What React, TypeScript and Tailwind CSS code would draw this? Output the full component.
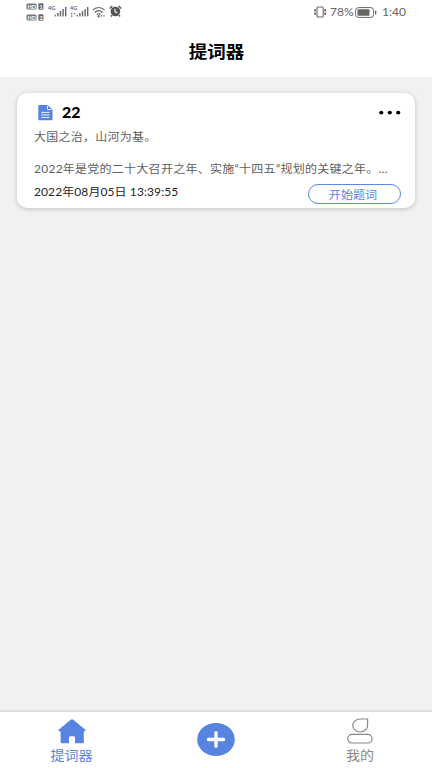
import type { ReactNode } from 'react';

interface Script {
  title: string;
  lines: string[];
  createdAt: string;
}

const scripts: Script[] = [
  {
    title: '22',
    lines: ['大国之治，山河为基。', '2022年是党的二十大召开之年、实施“十四五”规划的关键之年。…'],
    createdAt: '2022年08月05日 13:39:55',
  },
];

function Signal({ dots }: { dots?: boolean }) {
  return (
    <svg width="20" height="13" viewBox="0 0 20 13" fill="#666">
      <text x="0" y="5" fontSize="5.5" fontWeight="700">4G</text>
      {dots && <path d="M1 8h1.4v1.2H1zM4 8h1.4v1.2H4zM1 10.5h1.4v1.2H1z" />}
      <rect x="6.6" y="9.8" width="1.3" height="1.6" />
      <rect x="9.2" y="8" width="1.4" height="3.4" />
      <rect x="11.8" y="6" width="1.4" height="5.4" />
      <rect x="14.4" y="4" width="1.4" height="7.4" />
      <rect x="17" y="2" width="1.4" height="9.4" />
    </svg>
  );
}

function HdBadge({ n }: { n: number }) {
  return (
    <svg width="18" height="7" viewBox="0 0 18 7" fontSize="5.5" fontWeight="700">
      <rect x=".4" y=".4" width="10.2" height="6.2" rx="1.5" fill="#777" />
      <text x="1.5" y="5.5" fill="#fff">HD</text>
      <rect x="12.4" y=".2" width="5" height="6.6" rx="1" fill="#666" />
      <text x="13.4" y="5.5" fill="#fff">{n}</text>
    </svg>
  );
}

function StatusBar() {
  return (
    <div className="flex h-6 items-start justify-between pr-[26px] pl-[26px]">
      <div className="flex pt-[3px]">
        <div className="mr-[4px] flex flex-col gap-[4px]">
          <HdBadge n={1} />
          <HdBadge n={2} />
        </div>
        <div className="flex gap-[2px] pt-[2px]">
          <Signal />
          <Signal dots />
        </div>
        <svg className="mt-[3px] ml-[2px]" width="15" height="12" viewBox="0 0 15 12" fill="none" stroke="#666" strokeWidth="1.2">
          <path d="M.8 4.2C4.2.6 9.2.6 12.6 4.2M2.8 6.5C5.2 4 8.2 4 10.6 6.5M4.8 8.7C6.1 7.4 7.4 7.4 8.6 8.7" />
          <circle cx="6.7" cy="10.3" r=".6" fill="#666" />
          <path d="M9.7 9v1.6M12 9v1.6" strokeWidth="1" />
        </svg>
        <svg className="mt-[2px] ml-[2px]" width="13" height="12" viewBox="0 0 13 12">
          <circle cx="6.4" cy="6.5" r="4.8" fill="#555" />
          <path d="M.8 3.5 3.2 1M12.1 3.5 9.7 1M3 10.2l-1.2 1.3M9.9 10.2l1.2 1.3" stroke="#555" strokeWidth="1.5" />
          <path d="M6 3.8v3l2.3 1.3" fill="none" stroke="#fff" strokeWidth="1.1" />
        </svg>
      </div>
      <div className="flex items-center pt-[5px] text-[12px] leading-[14px] text-[#666]">
        <svg width="15" height="12" viewBox="0 0 15 12" fill="none" stroke="#666" strokeWidth="1.1">
          <rect x="4" y="1" width="6.2" height="10" rx="1" />
          <path d="M2 3v6M12.2 3v6" strokeWidth="1.6" strokeDasharray="2.4 1.2" />
        </svg>
        <span className="ml-[2px] w-[24px] text-[12px] whitespace-nowrap">78%</span>
        <svg className="ml-[1px]" width="22" height="11" viewBox="0 0 22 11">
          <rect x=".6" y=".6" width="18" height="9.8" rx="2.8" fill="none" stroke="#666" strokeWidth="1" />
          <rect x="2.5" y="2.3" width="12" height="6.4" rx="1" fill="#666" />
          <rect x="20" y="3.5" width="1.3" height="4" rx=".6" fill="#666" />
        </svg>
        <span className="ml-[5px] w-[24px] text-[12px] whitespace-nowrap">1:40</span>
      </div>
    </div>
  );
}

function ScriptCard({ script }: { script: Script }) {
  return (
    <div className="mx-[17px] h-[115px] rounded-[10px] bg-white pt-[11px] pr-[14px] pl-[17px] shadow-[0_1px_5px_rgba(0,0,0,0.2)]">
      <div className="flex h-[17px] items-center">
        <svg className="ml-[4px]" width="15" height="16" viewBox="0 0 15 16">
          <path d="M1.2 0H9.5L14.5 4.5V14.5Q14.5 15.3 13.7 15.3H1.2Q.3 15.3 .3 14.5V.8Q.3 0 1.2 0Z" fill="#5784e0" />
          <path d="M9.5 1V3.8Q9.5 4.6 10.3 4.6H13.4" fill="none" stroke="#fff" strokeWidth="1" />
          <path d="M3.2 7.4H11.5M3.2 9.9H11.5M3.2 12.4H11.5" stroke="#fff" strokeWidth=".9" />
        </svg>
        <span className="ml-[9px] origin-left scale-x-[1.06] text-[15px] leading-[17px] font-black text-black">{script.title}</span>
        <svg className="ml-auto" width="22" height="6" viewBox="0 0 22 6">
          <ellipse cx="2.3" cy="2.6" rx="2.1" ry="1.9" />
          <ellipse cx="10.8" cy="2.6" rx="2.1" ry="1.9" />
          <ellipse cx="19.2" cy="2.6" rx="2.1" ry="1.9" />
        </svg>
      </div>
      <div className="mt-[8px] space-y-4 text-[11px] leading-4 tracking-[0.24px] text-[#606060]">
        {script.lines.map((line, i) => (
          <p key={i} className="origin-left scale-x-[1.09] whitespace-nowrap">{line}</p>
        ))}
      </div>
      <div className="mt-[7px] flex items-start justify-between">
        <span className="origin-left scale-x-[1.09] text-[11px] leading-4 tracking-[0.09px] whitespace-nowrap text-[#262626]">{script.createdAt}</span>
        <button className="h-[20px] w-[93px] rounded-full border border-[#5b87df] pr-[3px] text-[11px] leading-[19px] text-[#5784e0]">
          <span className="inline-block scale-x-[1.1]">开始题词</span>
        </button>
      </div>
    </div>
  );
}

function Tab({ label, className, children }: { label: string; className: string; children: ReactNode }) {
  return (
    <button className={className}>
      {children}
      <span className="mt-[4px] inline-block scale-x-[1.08] text-[13px] leading-[15px]">{label}</span>
    </button>
  );
}

export default function App() {
  return (
    <div className="flex h-[768px] w-[432px] flex-col overflow-hidden bg-[#f1f1f1] font-['Lato','Noto_Sans_CJK_SC',sans-serif]">
      <header className="h-[77px] bg-white">
        <StatusBar />
        <h1 className="mt-[17px] text-center text-[17px] leading-[22px] font-bold text-black">
          <span className="inline-block scale-x-[1.09]">提词器</span>
        </h1>
      </header>

      <main className="flex-1 pt-4">
        {scripts.map((script) => (
          <ScriptCard key={script.createdAt} script={script} />
        ))}
      </main>

      <nav className="grid h-[58px] grid-cols-3 border-t-2 border-[#dedede] bg-white">
        <Tab label="提词器" className="flex flex-col items-center pt-[7px] text-[#5784e0]">
          <svg width="28" height="25" viewBox="0 0 28 25" fill="currentColor">
            <path d="M13 .5Q14 -.1 15 .5L27.3 10.8Q28.1 12 26.6 12.2H25.8V23Q25.8 24.3 24.3 24.3H17V18.6Q17 17.3 15.7 17.3H12.3Q11 17.3 11 18.6V24.3H4.1Q2.6 24.3 2.6 23V12.2H1.5Q-.1 12 .7 10.8Z" />
          </svg>
        </Tab>
        <div className="flex justify-center pt-[11px]">
          <svg width="38" height="33" viewBox="0 0 38 33">
            <ellipse cx="19" cy="16.5" rx="18.8" ry="16.5" fill="#5784e0" />
            <path d="M19 9.8V23.2M11.4 16.5H26.6" stroke="#fff" strokeWidth="3.4" strokeLinecap="round" />
          </svg>
        </div>
        <Tab label="我的" className="flex flex-col items-center pt-[6px] text-[#888]">
          <svg width="26" height="26" viewBox="0 0 26 26" fill="none" stroke="currentColor" strokeWidth="1.2">
            <path d="M13.2 1H20.6V7.4A7.4 6.5 0 1 1 13.2 1Z" />
            <rect x=".8" y="16.4" width="24.2" height="8.6" rx="4.3" />
          </svg>
        </Tab>
      </nav>
    </div>
  );
}
